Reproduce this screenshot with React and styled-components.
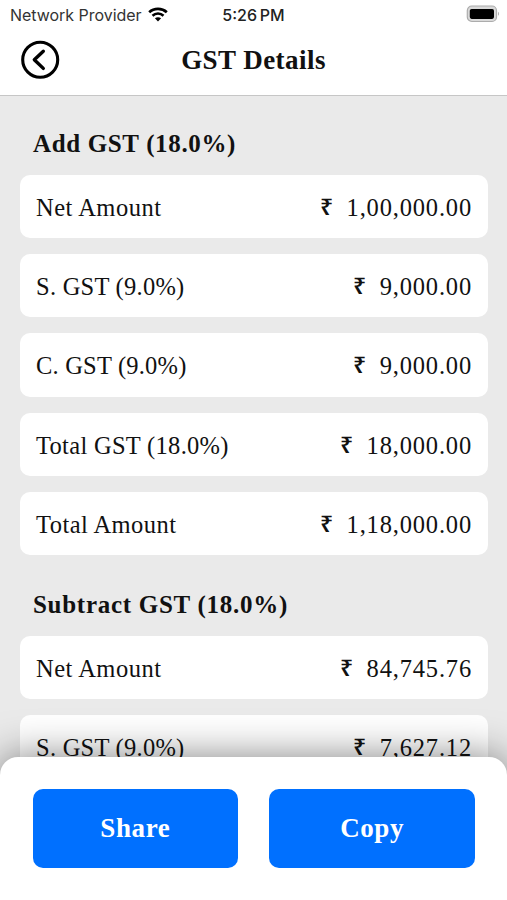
import React from "react";
import styled, { createGlobalStyle } from "styled-components";

const sections = [
  {
    title: "Add GST (18.0%)",
    spacing: 0.65,
    rows: [
      { label: "Net Amount", amount: "1,00,000.00", spacing: 0.5 },
      { label: "S. GST (9.0%)", amount: "9,000.00", spacing: 0.25 },
      { label: "C. GST (9.0%)", amount: "9,000.00", spacing: 0.2 },
      { label: "Total GST (18.0%)", amount: "18,000.00", spacing: 0.3 },
      { label: "Total Amount", amount: "1,18,000.00", spacing: 0.45 },
    ],
  },
  {
    title: "Subtract GST (18.0%)",
    spacing: 0.72,
    rows: [
      { label: "Net Amount", amount: "84,745.76", spacing: 0.5 },
      { label: "S. GST (9.0%)", amount: "7,627.12", spacing: 0.25 },
    ],
  },
];

const WifiIcon = () => (
  <svg width="20" height="15" viewBox="0 0 20 15" fill="none">
    <path d="M1.2 5.2C6 .7 14 .7 18.8 5.2" stroke="#000" strokeWidth="2.7" />
    <path d="M4.5 8.7c3.1-2.9 7.9-2.9 11 0" stroke="#000" strokeWidth="2.6" />
    <path d="M10 14.4 6.9 11.3c1.7-1.5 4.5-1.5 6.2 0z" fill="#000" />
  </svg>
);

const BatteryIcon = () => (
  <svg width="34" height="18" viewBox="0 0 34 18" fill="none">
    <rect x="1.3" y="1" width="29.2" height="15.5" rx="4.5" fill="#d9d9d9" stroke="#acacac" strokeWidth="1.2" />
    <rect x="3.8" y="3.9" width="24.2" height="10" rx="1.8" fill="#000" />
    <path d="M32 6.8c1.3.6 1.3 3.4 0 4z" fill="#acacac" />
  </svg>
);

const BackIcon = () => (
  <svg width="40" height="40" viewBox="0 0 40 40" fill="none" stroke="#000">
    <circle cx="20.2" cy="19.7" r="17.5" strokeWidth="3.1" />
    <path d="m23.3 11.2-9 8.5 9 8.7" strokeWidth="3.4" strokeLinecap="round" strokeLinejoin="round" />
  </svg>
);

export default function App() {
  return (
    <Screen>
      <GlobalStyle />
      <StatusBar>
        <Carrier>
          <span>Network Provider</span>
          <WifiIcon />
        </Carrier>
        <Time>5:26 PM</Time>
        <BatteryIcon />
      </StatusBar>
      <Header>
        <BackButton aria-label="Back">
          <BackIcon />
        </BackButton>
        <Title>GST Details</Title>
      </Header>
      <Content>
        {sections.map((section) => (
          <Section key={section.title}>
            <SectionTitle $spacing={section.spacing}>{section.title}</SectionTitle>
            <Rows>
              {section.rows.map((row) => (
                <Row key={row.label}>
                  <Label $spacing={row.spacing}>{row.label}</Label>
                  <Amount>
                    <Rupee>₹</Rupee>
                    <span>{row.amount}</span>
                  </Amount>
                </Row>
              ))}
            </Rows>
          </Section>
        ))}
      </Content>
      <ActionSheet>
        <ActionButton>Share</ActionButton>
        <ActionButton>Copy</ActionButton>
      </ActionSheet>
    </Screen>
  );
}

const GlobalStyle = createGlobalStyle`
  * {
    box-sizing: border-box;
  }

  body {
    margin: 0;
  }
`;

const Screen = styled.div`
  display: flex;
  flex-direction: column;
  width: 507px;
  height: 900px;
  overflow: hidden;
  background: #eaeaea;
  color: #111;
  font-family: "Liberation Serif", serif;
`;

const StatusBar = styled.div`
  display: grid;
  grid-template-columns: 1fr auto 1fr;
  align-items: center;
  flex: none;
  height: 30px;
  padding: 0 7px 0 10px;
  background: #fff;
  font-family: Inter, sans-serif;
  font-size: 16px;

  > :last-child {
    justify-self: end;
    margin-top: -2px;
  }
`;

const Carrier = styled.div`
  display: flex;
  align-items: center;
  gap: 6px;
  color: #333;
  letter-spacing: -0.03px;
  white-space: nowrap;

  svg {
    margin-top: -1px;
  }
`;

const Time = styled.div`
  margin-right: 3px;
  color: #222;
  font-weight: 500;
  word-spacing: -1.5px;
  white-space: nowrap;
`;

const Header = styled.header`
  display: grid;
  grid-template-columns: 40px 1fr 40px;
  align-items: center;
  flex: none;
  height: 66px;
  padding: 0 20px 5px;
  border-bottom: 1px solid #c6c6c6;
  background: #fff;
`;

const BackButton = styled.button`
  display: flex;
  padding: 0;
  border: none;
  background: none;
`;

const Title = styled.h1`
  margin: 0 0 1px;
  font-size: 27px;
  line-height: 30px;
  letter-spacing: 0.45px;
  text-align: center;
`;

const Content = styled.main`
  flex: 1;
  min-height: 0;
  padding: 32px 19px 0 20px;
  overflow: hidden;
`;

const Section = styled.section`
  & + & {
    margin-top: 34px;
  }
`;

const SectionTitle = styled.h2`
  margin: 0 0 16px 13px;
  font-size: 25px;
  line-height: 31px;
  letter-spacing: ${(props) => props.$spacing}px;
  white-space: nowrap;
`;

const Rows = styled.div`
  display: flex;
  flex-direction: column;
  gap: 16px;
`;

const Row = styled.div`
  display: flex;
  align-items: center;
  justify-content: space-between;
  height: 63.2px;
  padding: 3px 16px 0;
  border-radius: 10px;
  background: #fff;
  font-size: 24.5px;
  line-height: 30px;
  white-space: nowrap;
`;

const Label = styled.span`
  letter-spacing: ${(props) => props.$spacing}px;
`;

const Amount = styled.span`
  display: flex;
  align-items: center;
  gap: 14px;
  letter-spacing: 0.82px;
`;

const Rupee = styled.span`
  margin: 0 -0.5px 4px 0;
  font-family: "Noto Sans", sans-serif;
  font-size: 23px;
  font-weight: 600;
  letter-spacing: 0;
`;

const ActionSheet = styled.footer`
  display: grid;
  grid-template-columns: 1fr 1fr;
  gap: 31px;
  flex: none;
  height: 143px;
  margin-top: -20px;
  padding: 32px 32px 0 32.5px;
  border-radius: 18px 18px 0 0;
  background: #fff;
  box-shadow: 0 0 40px rgba(0, 0, 0, 0.5);
  z-index: 1;
`;

const ActionButton = styled.button`
  height: 79px;
  padding: 0 0 1px;
  border: none;
  border-radius: 10px;
  background: #0070ff;
  color: #fff;
  font-family: inherit;
  font-size: 27px;
  font-weight: bold;
  letter-spacing: 0.6px;
`;
